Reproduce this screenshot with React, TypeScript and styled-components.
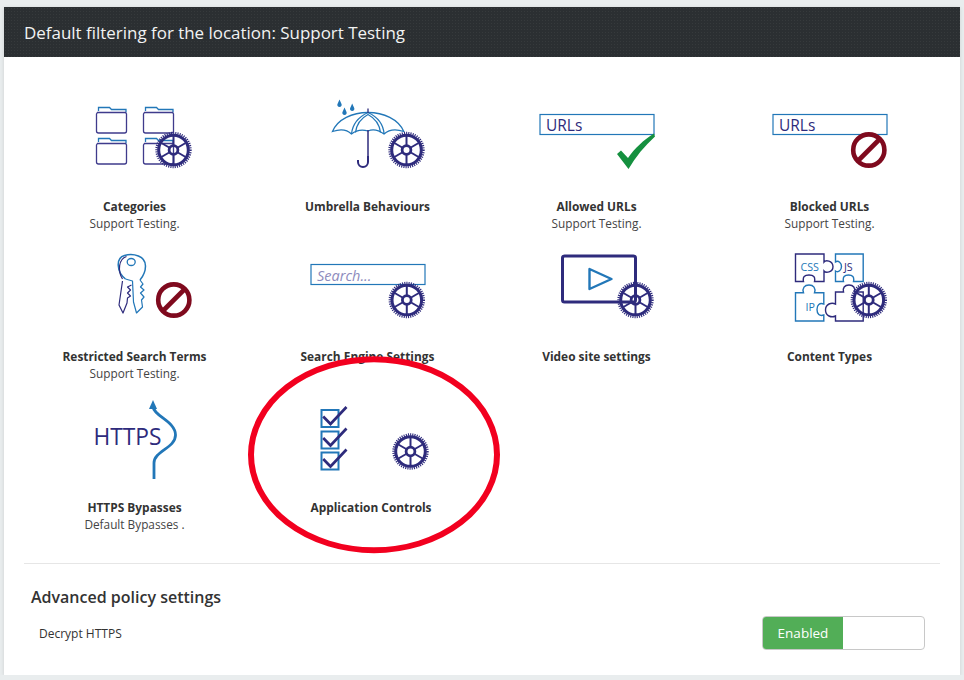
import styled, { createGlobalStyle } from 'styled-components';
import type { ReactNode } from 'react';

const NAVY = '#2e2b7c';
const BLUE = '#2277b8';
const MAROON = '#7f0a1e';

const GlobalStyle = createGlobalStyle`
  html, body {
    margin: 0;
    background: #e9edee;
    font-family: "Open Sans", "Liberation Sans", sans-serif;
  }
`;

const Panel = styled.div`
  position: relative;
  box-sizing: border-box;
  width: 956px;
  height: 668px;
  margin: 7px 0 0 4px;
  background: #fff;
  box-shadow: 0 1px 4px rgba(0, 0, 0, 0.12);
`;

const Header = styled.h1`
  box-sizing: border-box;
  height: 50px;
  margin: 0;
  padding-left: 20px;
  display: flex;
  align-items: center;
  font-size: 16.95px;
  font-weight: 400;
  color: #f2f3f3;
  background-color: #2b2f32;
  background-image: radial-gradient(rgba(255, 255, 255, 0.05) 1px, transparent 1px);
  background-size: 3px 3px;
`;

const Grid = styled.div`
  display: grid;
  grid-template-columns: 233px 233px 225px 241px;
  grid-template-rows: 150px 151px 170px;
  padding: 35px 0 0 14px;
`;

const Tile = styled.div`
  display: flex;
  flex-direction: column;
  align-items: center;
`;

const IconSvg = styled.svg`
  display: block;
  width: 130px;
  height: 90px;
  margin-bottom: 16px;
  overflow: visible;
`;

const TileTitle = styled.div<{ $nudge?: number }>`
  padding-left: ${props => props.$nudge ?? 0}px;
  font-size: 11.9px;
  line-height: 17px;
  font-weight: 700;
  color: #333;
`;

const TileNote = styled.div`
  font-size: 11.8px;
  line-height: 17px;
  color: #444;
`;

const Divider = styled.hr`
  height: 1px;
  margin: 0 20px;
  border: 0;
  background: #e6e6e6;
`;

const Advanced = styled.section`
  padding: 23px 35px 0 27px;
`;

const AdvancedTitle = styled.h2`
  margin: 0 0 8px;
  font-size: 16px;
  line-height: 21px;
  font-weight: 600;
  color: #333;
`;

const SettingRow = styled.div`
  display: flex;
  align-items: center;
  justify-content: space-between;
  padding-left: 8px;
  font-size: 12px;
  color: #333;
`;

const Toggle = styled.div`
  box-sizing: border-box;
  width: 163px;
  height: 34px;
  border: 1px solid #c8c8c8;
  border-radius: 4px;
  overflow: hidden;
`;

const ToggleOn = styled.div`
  width: 80px;
  height: 100%;
  display: flex;
  align-items: center;
  justify-content: center;
  font-size: 13.5px;
  color: #fff;
  background: #52ae57;
`;

const Circled = styled.svg`
  position: absolute;
  left: 0;
  top: 0;
  width: 956px;
  height: 668px;
  pointer-events: none;
`;

function Gear({ cx, cy }: { cx: number; cy: number }) {
  const spokes = [90, 270, 30, 150, 210, 330].map(a => (a * Math.PI) / 180);
  return (
    <g fill="none" stroke={NAVY}>
      <circle cx={cx} cy={cy} r={17} strokeWidth={2.4} strokeDasharray="1.1 1.1" />
      <circle cx={cx} cy={cy} r={14.8} strokeWidth={3} />
      <circle cx={cx} cy={cy} r={4.4} strokeWidth={2.8} />
      {spokes.map(a => (
        <line
          key={a}
          x1={cx + 5 * Math.cos(a)}
          y1={cy + 5 * Math.sin(a)}
          x2={cx + 14 * Math.cos(a)}
          y2={cy + 14 * Math.sin(a)}
          strokeWidth={2}
        />
      ))}
    </g>
  );
}

function NoEntry({ cx, cy }: { cx: number; cy: number }) {
  const d = 11.5;
  return (
    <g fill="none" stroke={MAROON} strokeWidth={4.6}>
      <circle cx={cx} cy={cy} r={15.6} />
      <line x1={cx - d} y1={cy + d} x2={cx + d} y2={cy - d} />
    </g>
  );
}

function Folder({ x, y }: { x: number; y: number }) {
  return (
    <g fill="none" strokeWidth={1.3}>
      <path d={`M${x + 2} ${y + 4}v-3.5h11l2 2h14.5v3`} stroke={BLUE} />
      <path
        d={`M${x} ${y + 7}l1-1.5h28l1 1.5v17a2 2 0 0 1-2 2h-26a2 2 0 0 1-2-2z`}
        stroke="#3f3b8c"
      />
    </g>
  );
}

function UrlBox({ x, text, italic }: { x: number; text: string; italic?: boolean }) {
  return (
    <g>
      <rect x={x} y={114.5} width={114} height={20} fill="none" stroke={BLUE} strokeWidth={1.2} />
      <text
        x={x + 6}
        y={130.5}
        fontSize={italic ? 14.5 : 15.5}
        fontStyle={italic ? 'italic' : 'normal'}
        fill={italic ? '#8d8bbd' : NAVY}
        fontFamily='"Open Sans", sans-serif'
      >
        {text}
      </text>
    </g>
  );
}

type TileData = { title: string; note?: string; nudge?: number; box: string; icon: ReactNode };

const tiles: TileData[] = [
  {
    title: 'Categories',
    note: 'Support Testing.',
    box: '69.5 92 130 90',
    icon: (
      <>
        <Folder x={96} y={107} />
        <Folder x={143} y={107} />
        <Folder x={96} y={138} />
        <Folder x={143} y={138} />
        <Gear cx={173} cy={150} />
      </>
    ),
  },
  {
    title: 'Umbrella Behaviours',
    box: '302.5 92 130 90',
    icon: (
      <>
        <g fill="none" stroke={BLUE} strokeWidth={1.3}>
          <path d="M332 131.500C337 119 352 112.500 367.500 112.500C383 112.500 398 119 403.300 131.500C396 129 389 129 383.500 134C378 130 372 129 367.500 131C361 129 356 130 351 134C346 129 339 129 332 131.500Z" />
          <path d="M351 134C352 124 358 117 367.500 112.500C377 117 383 124 383.500 134" />
          <path d="M355 132.500C356 124 361 118 367.500 114.500C374 118 379 124 380 132.500" />
        </g>
        <path d="M367.500 108.500V113" stroke={NAVY} strokeWidth={1.3} />
        <path d="M367.500 130V156" stroke={NAVY} strokeWidth={1.5} fill="none" />
        <path d="M367.500 156V162a5 5 0 0 1-10 0V160" stroke={NAVY} strokeWidth={2} fill="none" />
        <g fill={BLUE}>
          <path d="M339 99.500l2 4.500a2.200 2.200 0 1 1-4 0z" />
          <path d="M344 107.500l2 4.500a2.200 2.200 0 1 1-4 0z" />
          <path d="M351.700 103.500l2 4.500a2.200 2.200 0 1 1-4 0z" />
        </g>
        <Gear cx={406} cy={150} />
      </>
    ),
  },
  {
    title: 'Allowed URLs',
    note: 'Support Testing.',
    box: '531.5 92 130 90',
    icon: (
      <>
        <UrlBox x={539.5} text="URLs" />
        <path
          d="M616.500 154L620.500 150.500L627.500 158C634 148.500 643 140 653.500 133.500L654.500 136.500C644 146 635 157 628 169Z"
          fill="#15903f"
        />
      </>
    ),
  },
  {
    title: 'Blocked URLs',
    note: 'Support Testing.',
    box: '764.5 92 130 90',
    icon: (
      <>
        <UrlBox x={772.5} text="URLs" />
        <NoEntry cx={868.3} cy={150} />
      </>
    ),
  },
  {
    title: 'Restricted Search Terms',
    note: 'Support Testing.',
    box: '69.5 242 130 90',
    icon: (
      <>
        <g fill="none" strokeLinejoin="round">
          <path
            d="M122 281L118.500 305L122.500 313L126.500 303L127 298L130 296L127 293L130 290L127 287L131 285"
            stroke={NAVY}
            strokeWidth={1.2}
          />
          <path
            d="M125 279L132 281L133 302L136 313L142 307L141 300L143.500 297L140 293L143.500 290L140 287L142.500 284L139.500 280"
            stroke={BLUE}
            strokeWidth={1.2}
          />
          <path
            d="M125 279C116 272 115 258 124 255.500C133 253 145 256 145 266C145 272 142 277 139.500 280"
            stroke={BLUE}
            strokeWidth={1.500}
          />
          <path d="M122 279C117 271 118 259 126 256.500" stroke={NAVY} strokeWidth={1.200} />
          <ellipse cx={130.700} cy={262} rx={4} ry={3.500} stroke={BLUE} strokeWidth={1.300} />
        </g>
        <NoEntry cx={173.300} cy={300} />
      </>
    ),
  },
  {
    title: 'Search Engine Settings',
    box: '302.5 242 130 90',
    icon: (
      <>
        <g transform="translate(-229.500 150)">
          <UrlBox x={540} text="Search..." italic />
        </g>
        <Gear cx={406.300} cy={300} />
      </>
    ),
  },
  {
    title: 'Video site settings',
    box: '531.5 242 130 90',
    icon: (
      <>
        <rect x={562} y={256} width={73} height={46} rx={2} fill="none" stroke={NAVY} strokeWidth={3} />
        <path d="M589 269V289L611 279Z" fill="none" stroke={BLUE} strokeWidth={2.400} strokeLinejoin="round" />
        <Gear cx={635} cy={300} />
      </>
    ),
  },
  {
    title: 'Content Types',
    box: '764.5 242 130 90',
    icon: (
      <>
        <g fill="none" strokeWidth={1.400}>
          <path
            d="M795 254H823.500V262C825 260 832 260 832.500 266.500C832.500 273 825 273 823.500 271V281.500H814C815 277 813 275 808.500 275C804 275 802 277 803 281.500H795Z"
            stroke={NAVY}
          />
          <path
            d="M835 254H862.700V281.500H853C854 277 852 275 848 275C844 275 842 277 843 281.500H835V271C838 273 841 270 841 266.500C841 263 838 260 835 262Z"
            stroke={BLUE}
          />
          <path
            d="M795 292.700H803C801.500 288 804 285 808.500 285C813 285 815.500 288 814 292.700H823.300V304C819 302.500 816.500 305 816.500 309.500C816.500 314 819 316.500 823.300 315V321H795Z"
            stroke={BLUE}
          />
          <path
            d="M835 321V316C831 318 825 316 825 310C825 304 831 302 835 304V292H843C842 288 844 285 848.500 285C853 285 855 288 854 292H862.700V321Z"
            stroke={NAVY}
          />
        </g>
        <g fontFamily='"Open Sans", sans-serif' fontSize={10.700}>
          <text x={800} y={270.500} fill={BLUE}>CSS</text>
          <text x={843.500} y={270.500} fill={NAVY}>JS</text>
          <text x={805} y={311} fill={BLUE}>IP</text>
        </g>
        <Gear cx={868.300} cy={300} />
      </>
    ),
  },
  {
    title: 'HTTPS Bypasses',
    note: 'Default Bypasses .',
    box: '69.5 393 130 90',
    icon: (
      <>
        <text
          x={93}
          y={445}
          fontSize={24.500}
          fill={NAVY}
          fontFamily='"Open Sans", sans-serif'
          textLength={68}
          lengthAdjust="spacingAndGlyphs"
        >
          HTTPS
        </text>
        <path
          d="M152.500 406C152.500 416 175 421 175 435C175 448 153.500 451 153.500 463V479"
          fill="none"
          stroke={BLUE}
          strokeWidth={2.800}
        />
        <path d="M152.500 400L156.500 409H148.500Z" fill={BLUE} />
      </>
    ),
  },
  {
    title: 'Application Controls',
    nudge: 7,
    box: '302.5 393 130 90',
    icon: (
      <>
        {[410, 431.500, 452.500].map(y => (
          <g key={y}>
            <rect x={321} y={y} width={17} height={17} fill="none" stroke={BLUE} strokeWidth={2} />
            <path
              d={`M322.700 ${y + 6.500}L330 ${y + 14}L346 ${y - 3}`}
              fill="none"
              stroke={NAVY}
              strokeWidth={2.700}
            />
          </g>
        ))}
        <Gear cx={410} cy={451.500} />
      </>
    ),
  },
];

export default function App() {
  return (
    <>
      <GlobalStyle />
      <Panel>
        <Header>Default filtering for the location: Support Testing</Header>
        <Grid>
          {tiles.map(tile => (
            <Tile key={tile.title}>
              <IconSvg viewBox={tile.box}>{tile.icon}</IconSvg>
              <TileTitle $nudge={tile.nudge}>{tile.title}</TileTitle>
              {tile.note && <TileNote>{tile.note}</TileNote>}
            </Tile>
          ))}
        </Grid>
        <Divider />
        <Advanced>
          <AdvancedTitle>Advanced policy settings</AdvancedTitle>
          <SettingRow>
            Decrypt HTTPS
            <Toggle>
              <ToggleOn>Enabled</ToggleOn>
            </Toggle>
          </SettingRow>
        </Advanced>
        {/* red marker drawn over the screenshot */}
        <Circled viewBox="4 7 956 668">
          <ellipse cx={374} cy={454.700} rx={123} ry={95.500} fill="none" stroke="#f2001f" strokeWidth={6} />
        </Circled>
      </Panel>
    </>
  );
}
